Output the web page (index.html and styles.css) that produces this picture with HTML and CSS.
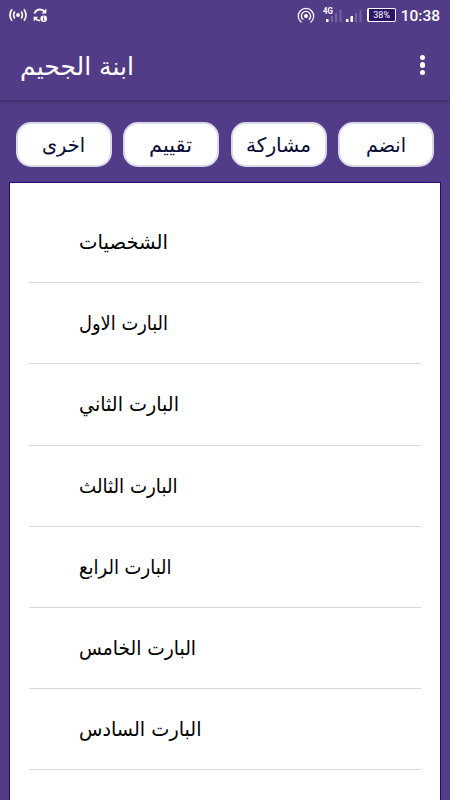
FILE: index.html
```html
<!DOCTYPE html>
<html lang="ar">
<head>
    <meta charset="UTF-8">
    <meta name="viewport" content="width=device-width, initial-scale=1.0">
    <title>ابنة الجحيم</title>
    <link rel="stylesheet" href="styles.css">
</head>
<body>
    <header class="top">
        <div class="status-bar">
            <svg class="icon-cast" width="18" height="14" viewBox="0 0 18 14" fill="none" stroke="#fff" stroke-width="1.7">
                <circle cx="9" cy="7" r="1.9" fill="#fff" stroke="none"/>
                <path d="M5.8 3.5Q3.4 7 5.8 10.5M12.2 3.5Q14.6 7 12.2 10.5M3 1.2Q-1 7 3 12.8M15 1.2Q19 7 15 12.8"/>
            </svg>
            <svg class="icon-sync" width="15" height="15" viewBox="0 0 15 15" fill="none" stroke="#fff" stroke-width="1.9">
                <path d="M1.5 5.5Q3 1.5 7 1.5Q10 1.5 12 4M1.5 9Q3 12.5 7 12.6"/>
                <path d="M13.3 0.5V5.5H8.5ZM0.7 13.5V8.7H5.2Z" fill="#fff" stroke="none"/>
                <circle cx="10.7" cy="10.7" r="3.3" fill="#fff" stroke="none"/>
                <path d="M10.7 8.5V9.5M10.7 10.2V13" stroke="#523b87" stroke-width="1"/>
            </svg>
            <svg class="icon-hotspot" width="18" height="17" viewBox="0 0 18 17" fill="none" stroke="#fff" stroke-width="1.3">
                <circle cx="9" cy="9" r="2" fill="#fff" stroke="none"/>
                <path d="M6.2 12.6A4.6 4.6 0 1 1 11.8 12.6M4.5 15.4A7.7 7.7 0 1 1 13.5 15.4"/>
            </svg>
            <svg class="icon-signal" width="40" height="17" viewBox="0 0 40 17">
                <path d="M2 13h2.5v3H2zM22 13h2.5v3H22zM26.500 10h2.5v6h-2.500z" fill="#fff"/>
                <path d="M7 10h2v6H7zM11 7h2v9h-2zM15.500 4h2v12h-2zM31 7h2v9h-2zM35.500 4h2v12h-2z" fill="#7564a0"/>
                <text x="-1" y="8" class="network" textLength="10" lengthAdjust="spacingAndGlyphs">4G</text>
            </svg>
            <div class="battery">38%</div>
            <div class="clock">10:38</div>
        </div>
        <div class="toolbar">
            <h1><svg width="115" height="40"><text x="0" y="30" textLength="114" lengthAdjust="spacingAndGlyphs">ابنة الجحيم</text></svg></h1>
            <div class="menu"><i></i><i></i><i></i></div>
        </div>
    </header>
    <nav class="actions">
        <button><svg width="44" height="30"><text x="0" y="22" textLength="43" lengthAdjust="spacingAndGlyphs">اخرى</text></svg></button>
        <button><svg width="44" height="30"><text x="0" y="22" textLength="43" lengthAdjust="spacingAndGlyphs">تقييم</text></svg></button>
        <button><svg width="66" height="30"><text x="0" y="22" textLength="65" lengthAdjust="spacingAndGlyphs">مشاركة</text></svg></button>
        <button><svg width="42" height="30"><text x="1" y="22" textLength="40" lengthAdjust="spacingAndGlyphs">انضم</text></svg></button>
    </nav>
    <main class="chapters">
        <ul>
            <li><svg width="130" height="30"><text x="0" y="22" textLength="89" lengthAdjust="spacingAndGlyphs">الشخصيات</text></svg></li>
            <li><svg width="130" height="30"><text x="0" y="22" textLength="89" lengthAdjust="spacingAndGlyphs">البارت الاول</text></svg></li>
            <li><svg width="130" height="30"><text x="0" y="22" textLength="100" lengthAdjust="spacingAndGlyphs">البارت الثاني</text></svg></li>
            <li><svg width="130" height="30"><text x="0" y="22" textLength="98.5" lengthAdjust="spacingAndGlyphs">البارت الثالث</text></svg></li>
            <li><svg width="130" height="30"><text x="0" y="22" textLength="92.5" lengthAdjust="spacingAndGlyphs">البارت الرابع</text></svg></li>
            <li><svg width="130" height="30"><text x="0" y="22" textLength="117" lengthAdjust="spacingAndGlyphs">البارت الخامس</text></svg></li>
            <li><svg width="130" height="30"><text x="0" y="22" textLength="122.5" lengthAdjust="spacingAndGlyphs">البارت السادس</text></svg></li>
        </ul>
    </main>
</body>
</html>
```
FILE: styles.css
```css
* {
    margin: 0;
    padding: 0;
    box-sizing: border-box;
}

body {
    font-family: "DejaVu Sans", sans-serif;
    background-color: #523b87;
    height: 100vh;
    overflow: hidden;
    display: flex;
    flex-direction: column;
}

svg {
    display: block;
    flex: none;
    overflow: visible;
}

.top {
    height: 100px;
    flex: none;
    box-shadow: 0 1px 4px rgba(0, 0, 0, 0.35);
    color: #fff;
}

.status-bar {
    height: 30px;
    padding: 0 10px 0 9px;
    display: flex;
    align-items: center;
}

.icon-sync {
    margin-left: 6px;
}

.icon-hotspot {
    margin-left: auto;
}

.icon-signal {
    margin-left: 9px;
    margin-top: -2px;
}

.network {
    font: bold 9px Roboto, sans-serif;
    fill: #fff;
}

.battery {
    width: 29px;
    height: 14px;
    margin-left: 3px;
    border: 1.5px solid #fff;
    border-left-width: 2px;
    border-radius: 2px;
    background-color: #2c1468;
    font: 9px/12px Roboto, sans-serif;
    text-align: center;
}

.clock {
    margin-left: 5px;
    font: 500 15.5px/20px Roboto, sans-serif;
    padding-top: 1px;
}

.toolbar {
    height: 70px;
    padding: 0 25px 0 20px;
    display: flex;
    align-items: center;
    justify-content: space-between;
}

.toolbar h1 {
    font-size: 25px;
    font-weight: normal;
}

text {
    fill: currentColor;
}

.menu {
    display: flex;
    flex-direction: column;
    gap: 2px;
}

.menu i {
    width: 5.5px;
    height: 5.5px;
    border-radius: 50%;
    background-color: #fff;
}

.actions {
    height: 82px;
    flex: none;
    padding: 22px 16px 15px;
    display: flex;
    justify-content: space-between;
}

.actions button {
    width: 96px;
    border: 2px solid #d8dae7;
    border-radius: 15px;
    background-color: #fff;
    color: #080b35;
    font: 20px "DejaVu Sans", sans-serif;
    display: flex;
    align-items: center;
    justify-content: center;
}

.chapters {
    flex: 1;
    min-height: 0;
    margin: 0 9px;
    padding: 19px;
    border: 1px solid #2b0878;
    border-bottom: 0;
    background-color: #fff;
    overflow: hidden;
}

.chapters ul {
    list-style: none;
}

.chapters li {
    height: 81.2px;
    padding-left: 50px;
    border-bottom: 1px solid #d8d8d8;
    color: #000;
    font-size: 20px;
    display: flex;
    align-items: center;
}
```
